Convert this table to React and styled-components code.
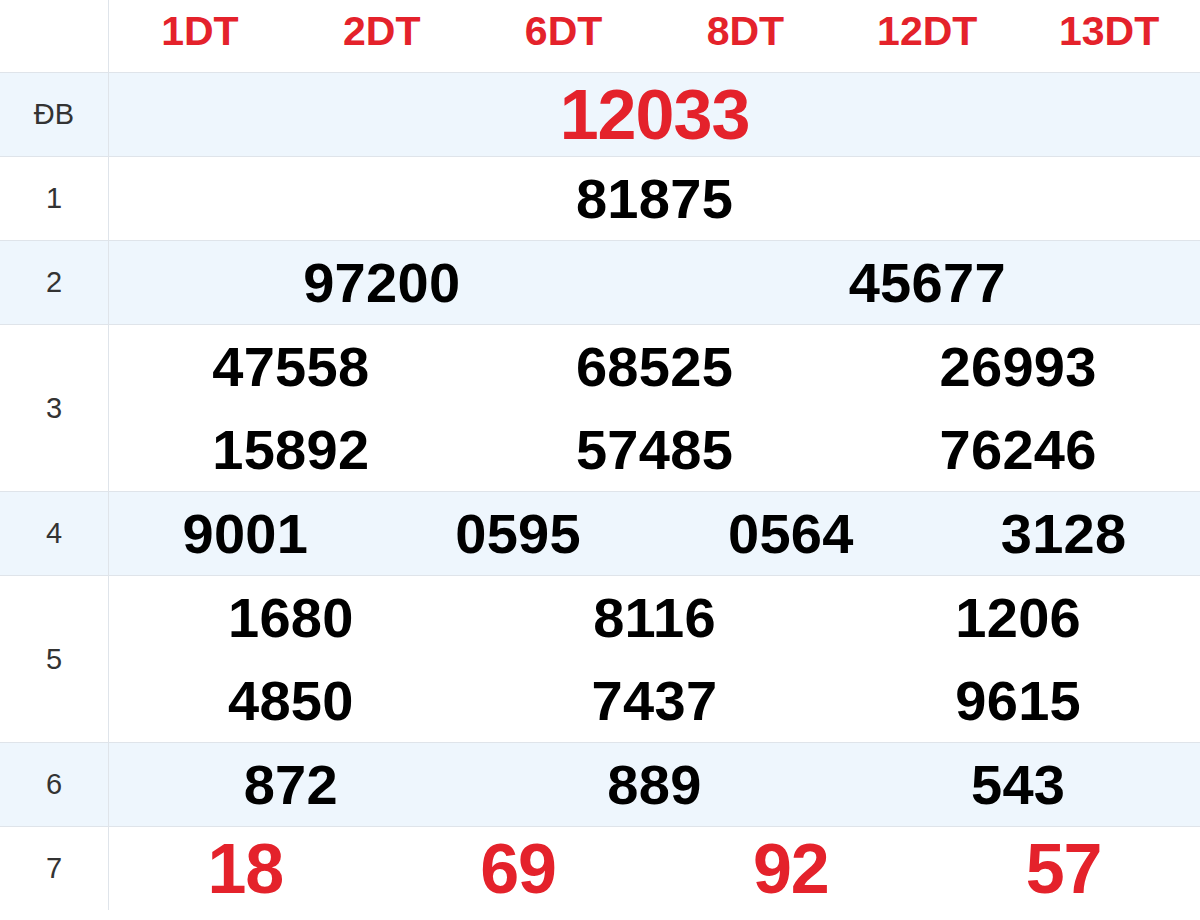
import React from "react";
import styled, { createGlobalStyle } from "styled-components";

const GlobalStyle = createGlobalStyle`
  html, body {
    margin: 0;
    padding: 0;
    background: #ffffff;
  }
  body {
    font-family: "Liberation Sans", Arial, sans-serif;
  }
`;

const RED = "#e4222b";
const BORDER = "#dfe4ea";
const STRIPE = "#eef6fd";
const UNIT = 83;

const Table = styled.div`
  width: 1200px;
  display: flex;
  flex-direction: column;
`;

const Row = styled.div`
  display: grid;
  grid-template-columns: 109px 1fr;
  background: ${(p) => (p.$striped ? STRIPE : "#ffffff")};
  border-bottom: ${(p) => (p.$last ? "none" : `1px solid ${BORDER}`)};
`;

const Label = styled.div`
  border-right: 1px solid ${BORDER};
  display: flex;
  align-items: center;
  justify-content: center;
  font-family: "Liberation Sans", Arial, sans-serif;
  font-size: 29px;
  color: #333333;
`;

const Cells = styled.div`
  display: grid;
  grid-template-columns: repeat(${(p) => p.$cols}, 1fr);
`;

const HeaderCell = styled.div`
  height: 62px;
  padding-bottom: 10px;
  display: flex;
  align-items: center;
  justify-content: center;
  font-weight: 700;
  font-size: 41px;
  color: ${RED};
`;

const Num = styled.div`
  height: ${UNIT}px;
  display: flex;
  align-items: center;
  justify-content: center;
  font-weight: 700;
  font-size: ${(p) => (p.$big ? "70px" : "56px")};
  letter-spacing: ${(p) => (p.$big ? "-1px" : "0.3px")};
  color: ${(p) => (p.$red ? RED : "#000000")};
`;

const headers = ["1DT", "2DT", "6DT", "8DT", "12DT", "13DT"];

const rows = [
  { label: "ĐB", cols: 1, nums: ["12033"], big: true, red: true },
  { label: "1", cols: 1, nums: ["81875"] },
  { label: "2", cols: 2, nums: ["97200", "45677"] },
  { label: "3", cols: 3, nums: ["47558", "68525", "26993", "15892", "57485", "76246"] },
  { label: "4", cols: 4, nums: ["9001", "0595", "0564", "3128"] },
  { label: "5", cols: 3, nums: ["1680", "8116", "1206", "4850", "7437", "9615"] },
  { label: "6", cols: 3, nums: ["872", "889", "543"] },
  { label: "7", cols: 4, nums: ["18", "69", "92", "57"], big: true, red: true },
];

export default function App() {
  return (
    <>
      <GlobalStyle />
      <Table>
        <Row>
          <Label />
          <Cells $cols={6}>
            {headers.map((h) => (
              <HeaderCell key={h}>{h}</HeaderCell>
            ))}
          </Cells>
        </Row>
        {rows.map((r, i) => (
          <Row key={r.label} $striped={i % 2 === 0} $last={i === rows.length - 1}>
            <Label>{r.label}</Label>
            <Cells $cols={r.cols}>
              {r.nums.map((n, j) => (
                <Num key={j} $big={r.big} $red={r.red}>
                  {n}
                </Num>
              ))}
            </Cells>
          </Row>
        ))}
      </Table>
    </>
  );
}
